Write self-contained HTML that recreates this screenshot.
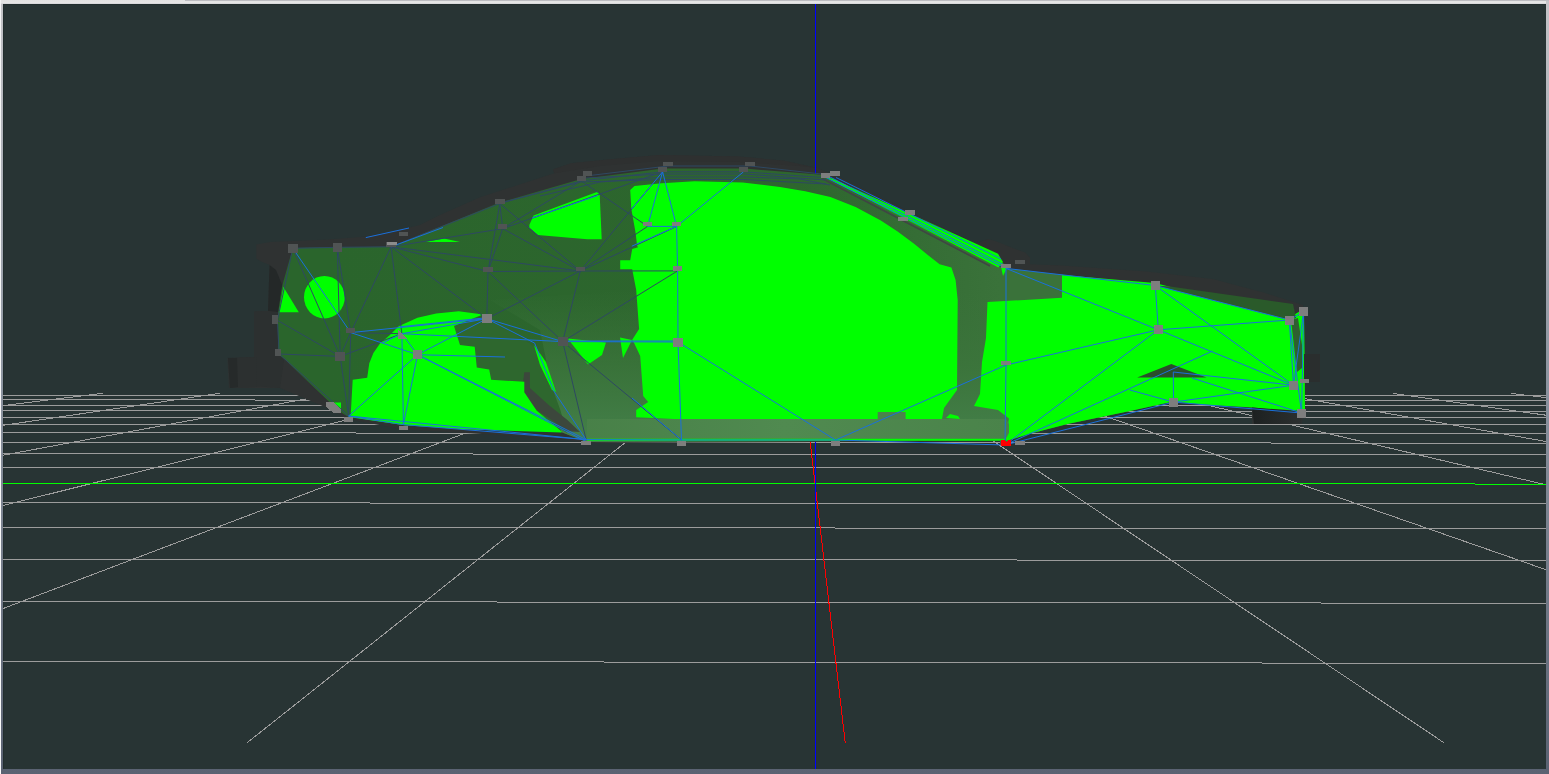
<!DOCTYPE html>
<html><head><meta charset="utf-8"><style>
html,body{margin:0;padding:0;width:1549px;height:774px;overflow:hidden;background:#fff;}
#frame{position:absolute;left:0;top:0;width:1549px;height:774px;background:linear-gradient(#c4c4c8,#8c94a0 50%,#5a6272);}
#c0{position:absolute;left:0;top:0;width:1px;height:774px;background:linear-gradient(#f4f4f4,#fafafa);}
#topbar{position:absolute;left:1px;top:0;width:1545px;height:4px;background:linear-gradient(#e2e2e2,#e6e6e6 70%,#d0d0d4);}
#row0{position:absolute;left:185px;top:0;width:1364px;height:1px;background:#bcbcc0;}
svg{position:absolute;left:0;top:0;}
</style></head><body>
<div id="frame"></div><div id="c0"></div><div id="topbar"></div><div id="row0"></div>
<svg width="1549" height="774" viewBox="0 0 1549 774">
<defs><clipPath id="vp"><rect x="3" y="4" width="1543" height="765"/></clipPath></defs>
<g clip-path="url(#vp)">
<rect x="3" y="4" width="1543" height="765" fill="#283434"/>
<rect x="3" y="4" width="1543" height="1" fill="#222e2e"/>
<rect x="3" y="4" width="1" height="765" fill="#222e2e"/>
<g shape-rendering="crispEdges">
<line x1="3.00" y1="395.37" x2="1546.00" y2="395.57" stroke="#9c9c9c" stroke-width="1"/>
<line x1="3.00" y1="399.97" x2="1546.00" y2="400.20" stroke="#9c9c9c" stroke-width="1"/>
<line x1="3.00" y1="405.08" x2="1546.00" y2="405.36" stroke="#9c9c9c" stroke-width="1"/>
<line x1="3.00" y1="410.80" x2="1546.00" y2="411.12" stroke="#9c9c9c" stroke-width="1"/>
<line x1="3.00" y1="417.24" x2="1546.00" y2="417.61" stroke="#9c9c9c" stroke-width="1"/>
<line x1="3.00" y1="424.54" x2="1546.00" y2="424.97" stroke="#9c9c9c" stroke-width="1"/>
<line x1="3.00" y1="432.89" x2="1546.00" y2="433.39" stroke="#9c9c9c" stroke-width="1"/>
<line x1="3.00" y1="442.53" x2="1546.00" y2="443.11" stroke="#9c9c9c" stroke-width="1"/>
<line x1="3.00" y1="453.80" x2="1546.00" y2="454.47" stroke="#9c9c9c" stroke-width="1"/>
<line x1="3.00" y1="467.13" x2="1546.00" y2="467.90" stroke="#9c9c9c" stroke-width="1"/>
<line x1="3.00" y1="502.76" x2="1546.00" y2="503.82" stroke="#9c9c9c" stroke-width="1"/>
<line x1="3.00" y1="527.33" x2="1546.00" y2="528.59" stroke="#9c9c9c" stroke-width="1"/>
<line x1="3.00" y1="559.01" x2="1546.00" y2="560.53" stroke="#9c9c9c" stroke-width="1"/>
<line x1="3.00" y1="601.42" x2="1546.00" y2="603.28" stroke="#9c9c9c" stroke-width="1"/>
<line x1="3.00" y1="661.10" x2="1546.00" y2="663.43" stroke="#9c9c9c" stroke-width="1"/>
<line x1="103.14" y1="393.25" x2="3.00" y2="405.58" stroke="#9c9c9c" stroke-width="1"/>
<line x1="219.68" y1="393.26" x2="3.00" y2="425.35" stroke="#9c9c9c" stroke-width="1"/>
<line x1="336.36" y1="393.28" x2="3.00" y2="455.23" stroke="#9c9c9c" stroke-width="1"/>
<line x1="453.18" y1="393.29" x2="3.00" y2="505.60" stroke="#9c9c9c" stroke-width="1"/>
<line x1="570.15" y1="393.30" x2="3.00" y2="608.57" stroke="#9c9c9c" stroke-width="1"/>
<line x1="687.26" y1="393.32" x2="246.79" y2="743.00" stroke="#9c9c9c" stroke-width="1"/>
<line x1="921.91" y1="393.35" x2="1444.32" y2="743.00" stroke="#9c9c9c" stroke-width="1"/>
<line x1="1039.45" y1="393.36" x2="1546.00" y2="569.69" stroke="#9c9c9c" stroke-width="1"/>
<line x1="1157.13" y1="393.37" x2="1546.00" y2="484.81" stroke="#9c9c9c" stroke-width="1"/>
<line x1="1274.96" y1="393.39" x2="1546.00" y2="441.50" stroke="#9c9c9c" stroke-width="1"/>
<line x1="1392.93" y1="393.40" x2="1546.00" y2="415.22" stroke="#9c9c9c" stroke-width="1"/>
<line x1="1511.04" y1="393.42" x2="1546.00" y2="397.58" stroke="#9c9c9c" stroke-width="1"/>
<line x1="3.00" y1="483.14" x2="1546.00" y2="484.05" stroke="#00ff00" stroke-width="1"/>
<line x1="804.51" y1="393.33" x2="845.29" y2="743.00" stroke="#ff0000" stroke-width="1"/>
<line x1="815.5" y1="4" x2="815.5" y2="769" stroke="#0000ff" stroke-width="1"/>
</g>
<g id="car">
<defs>
<linearGradient id="hullg" gradientUnits="userSpaceOnUse" x1="330" y1="0" x2="1000" y2="0">
<stop offset="0" stop-color="#2a652c"/><stop offset="0.7" stop-color="#2e662e"/><stop offset="1" stop-color="#3a723a"/>
</linearGradient>
<linearGradient id="lowg" gradientUnits="userSpaceOnUse" x1="0" y1="290" x2="0" y2="440">
<stop offset="0" stop-color="#3a733a" stop-opacity="0"/><stop offset="0.5" stop-color="#3c753c" stop-opacity="0.8"/><stop offset="1" stop-color="#44804a" stop-opacity="1"/>
</linearGradient>
<linearGradient id="rockg" gradientUnits="userSpaceOnUse" x1="560" y1="0" x2="1010" y2="0">
<stop offset="0" stop-color="#477f47"/><stop offset="0.5" stop-color="#508a50"/><stop offset="1" stop-color="#4a834a"/>
</linearGradient>
<linearGradient id="undg" gradientUnits="userSpaceOnUse" x1="1250" y1="0" x2="1302" y2="0">
<stop offset="0" stop-color="#1c2020"/><stop offset="1" stop-color="#2c3030"/>
</linearGradient>
</defs>
<!-- shell silhouette -->
<polygon fill="#2f3232" points="256.2,244.5 270,242 328,239.5 367,236.6 396,230.8 420,225 440,215 480,197.2 500,190.7 554.3,173.3 553,169.4 571,163.2 608,159.6 660,154.9 738.6,156.5 784,160.7 817,168 840,177.2 975,243.7 988.3,239 996.7,241.6 1015.2,249.1 1025.3,252.5 1030,257.5 1030,264.2 1062,265.5 1146.7,271.5 1212.7,279 1264.4,292.7 1293.3,302 1303,305 1304,354 1320,354 1320,382 1305,382 1305,411 1301.6,424 1252,424 1252,408 1202,404.4 1173,401.5 1130,411 1068.6,423.8 1030.6,433.6 1008,441 587,443 561,439 466,433 403,429.5 348,419 332,410 280,388 229,388 227.5,358 254,357 254,311.5 268,311 269.6,265 262,262 256.2,258.6"/>
<!-- shell shading -->
<polygon fill="#242828" points="269.6,265 276,270 283,287 279,312 268,311"/>
<polygon fill="#2c3030" points="254,311.5 278,312 278,354 284,360 280,388 254,386"/>
<polygon fill="#2c3030" points="228,358 256,357 257,387 230,388"/>
<polygon fill="#262a2a" points="228,358 237,358 238,387 230,388"/>
<polygon fill="#2e3030" points="554.3,173.3 553,169.4 571,163.2 608,159.6 660,154.9 738.6,156.5 784,160.7 817,168 800,166 740,162 660,161 600,166"/>
<!-- hull -->
<polygon fill="url(#hullg)" points="292.8,248 337.3,247.3 391,246.8 499.8,202.5 581.3,179 663,168.6 744.6,168.6 825.4,175.1 833,181 1003,268 1006,268.4 1155.3,285.5 1289.3,320 1295,317.5 1304,310 1305,411 1301.6,412.6 1254,407.5 1202,404.4 1173,401.5 1130,411 1068.6,423.8 1030.6,433.6 1008,440.6 587,442 561,432 404,425 348.6,417 338.9,410.9 284.6,359.2 278.1,354 278.1,312.7 282,286.8"/>
<polygon fill="url(#lowg)" points="490,300 640,290 1010,290 1010,440 587,442 561,432 540,330"/>
<!-- wheel well interior -->
<polygon fill="#2e672e" points="454,326 486,318 526.5,341 534.6,347.5 545.9,365.2 554,392.7 560.5,410.5 566.9,433.1 549,421 536.7,410.8 524.3,392.2 524.3,381.8 491.2,379.8 489.2,369.4 476.8,367.4 474.7,346.7 460,345"/>
<polygon fill="#3c473c" points="524.3,372.2 529.9,372.2 529.9,388 548.7,405 567.4,420 580,432 567.4,431.2 554.3,421.8 537.4,410.6 524.3,395.6 522.4,388"/>
<!-- bright green -->
<g fill="#00ff00">
<ellipse cx="324.4" cy="297.2" rx="20.4" ry="21.2"/>
<polygon points="283.3,286.8 298.8,312.2 278.9,312.2"/>
<polygon points="425,242 444,238.5 460,242"/>
<polygon points="529.4,224.7 533.6,215.4 597.6,191.7 599.7,194.8 601.7,239.2 587.3,239.2 537.7,235 529.4,227.8"/>
<polygon points="630.2,190 634.5,186 661.7,183.2 694.6,181.2 742.7,182.4 780,187 805.2,191.2 830.4,197 855.6,207.1 880.8,220.6 897.6,231.5 914.4,244 927.8,255 939.6,264.2 951.4,267.6 955.6,280 957.7,300 957,390 944,408 942,419 674.2,419 636.2,417.2 636.2,410 648.2,402 643.2,396 640.2,356 634.1,343 632.1,340 639.1,329 636.2,290 632.2,269.2 620.2,269.2 620.2,260.2 630.2,260.2 632.2,249.1 638,247.3 637.1,245.6 635.5,232.2 631.3,208.7"/>
<polygon points="348.6,417 350.7,414.9 352.7,379.8 367.2,377.7 369.3,363.2 373.4,352.9 380,343.5 389.4,335.6 398.7,326.2 417.5,317.8 436.2,313.5 458.7,311.2 483,314.6 454,326 460,345 474.7,346.7 476.8,367.4 489.2,369.4 491.2,379.8 524.3,381.8 524.3,392.2 536.7,410.8 549.1,421.1 561.5,431.4 561.5,432.5 466.4,429.4 404.4,425.2"/>
<polygon points="534,345 546,362 556,392 552,390 540,365"/>
<polygon points="567.7,338.4 606,342.5 602,355 588,364.5"/>
<polygon points="620,337.5 632,340 623,358"/>
<polygon points="329,402.5 341,402.5 341,412 335,410"/>
<polygon points="946,418 950,414 958,416 960,419"/>
<polygon points="987.5,302 1062,297.8 1062,275 1155,283 1289,317.5 1304,309 1305,411 1301.6,412.6 1254,407.5 1202,404.4 1173,401.5 1130,411 1068.6,423.8 1030.6,433.6 1006,441 1006,437 1009,418.4 998,410 974,406 980,394 982,362 986,338"/>
<polygon points="832,178.6 975,243.2 998,253.8 1003,262 998.4,267.6 825.4,176.9"/>
<polygon points="1000,262 1008,266 1003,276"/>
<rect x="587" y="438.5" width="418" height="2.2"/>
</g>
<!-- rocker -->
<polygon fill="url(#rockg)" points="587,419 1006,419 1009,424 1009,433 1006,438.5 587,438.5"/>
<polygon fill="#4a844a" points="877.7,419.5 877.7,412 905.6,412 905.6,419.5"/>
<!-- front details -->
<polygon fill="#2a4e2a" points="1137.2,377.5 1171.3,364 1206.5,377.5"/>
<polygon fill="url(#undg)" points="1252,407.5 1301.6,411 1301.6,424 1254,424"/>
<polygon fill="#2a2e2e" points="1304,354 1320,354 1320,382 1304,382"/>
<polygon fill="#2a5a2a" points="1170,286.5 1293,304 1296,318 1289.3,320 1155.3,285.5"/>
<polygon fill="#2f5f30" points="1291,320 1298,318 1302,345 1302,368 1297,372"/>
<line x1="822" y1="178.5" x2="990" y2="266" stroke="#404444" stroke-width="1.6"/>
<g stroke="#1a70dc" stroke-width="1"><line x1="822" y1="175.5" x2="1004" y2="267.5"/><line x1="829" y1="176.5" x2="1004" y2="265"/><line x1="836" y1="177.5" x2="1001" y2="259"/></g>
<g fill="none" stroke="#2e4862" stroke-width="1">
<polyline points="586,178 663,174 744,174 826,180"/>
<polyline points="540,196 600,182 663,177 744,177 800,179 830,185"/>
<polyline points="500,203 581,182 663,179.5 744,179.5 826,184"/>
</g>
<line x1="815.5" y1="4" x2="815.5" y2="173.5" stroke="#0000ff" stroke-width="1" shape-rendering="crispEdges"/>
</g><g><line x1="292.8" y1="248.3" x2="277.4" y2="320.3" stroke="#2e4862" stroke-width="1"/>
<line x1="277.4" y1="320.3" x2="279.2" y2="354.0" stroke="#2e4862" stroke-width="1"/>
<line x1="279.2" y1="354.0" x2="348.6" y2="416.0" stroke="#2e4862" stroke-width="1"/>
<line x1="292.8" y1="248.3" x2="337.3" y2="247.3" stroke="#2e4862" stroke-width="1"/>
<line x1="337.3" y1="247.3" x2="391.1" y2="246.8" stroke="#2e4862" stroke-width="1"/>
<line x1="292.8" y1="248.3" x2="340.2" y2="356.4" stroke="#2e4862" stroke-width="1"/>
<line x1="337.3" y1="247.3" x2="340.2" y2="356.4" stroke="#2e4862" stroke-width="1"/>
<line x1="337.3" y1="247.3" x2="350.7" y2="332.6" stroke="#2e4862" stroke-width="1"/>
<line x1="391.1" y1="246.8" x2="350.7" y2="332.6" stroke="#2e4862" stroke-width="1"/>
<line x1="391.1" y1="246.8" x2="401.9" y2="333.7" stroke="#2e4862" stroke-width="1"/>
<line x1="391.1" y1="246.8" x2="488.0" y2="271.5" stroke="#2e4862" stroke-width="1"/>
<line x1="391.1" y1="246.8" x2="580.3" y2="271.0" stroke="#2e4862" stroke-width="1"/>
<line x1="391.1" y1="246.8" x2="486.8" y2="318.7" stroke="#2e4862" stroke-width="1"/>
<line x1="391.1" y1="246.8" x2="499.8" y2="203.5" stroke="#2e4862" stroke-width="1"/>
<line x1="391.1" y1="246.8" x2="502.7" y2="228.6" stroke="#2e4862" stroke-width="1"/>
<line x1="277.4" y1="320.3" x2="340.2" y2="356.4" stroke="#2e4862" stroke-width="1"/>
<line x1="279.2" y1="354.0" x2="340.2" y2="356.4" stroke="#2e4862" stroke-width="1"/>
<line x1="350.7" y1="332.6" x2="401.9" y2="333.7" stroke="#2e4862" stroke-width="1"/>
<line x1="350.7" y1="332.6" x2="340.2" y2="356.4" stroke="#2e4862" stroke-width="1"/>
<line x1="350.7" y1="332.6" x2="348.6" y2="416.0" stroke="#2e4862" stroke-width="1"/>
<line x1="340.2" y1="356.4" x2="401.9" y2="333.7" stroke="#2e4862" stroke-width="1"/>
<line x1="340.2" y1="356.4" x2="348.6" y2="416.0" stroke="#2e4862" stroke-width="1"/>
<line x1="488.0" y1="271.5" x2="486.8" y2="318.7" stroke="#2e4862" stroke-width="1"/>
<line x1="488.0" y1="271.5" x2="580.3" y2="271.0" stroke="#2e4862" stroke-width="1"/>
<line x1="488.0" y1="271.5" x2="562.7" y2="341.6" stroke="#2e4862" stroke-width="1"/>
<line x1="580.3" y1="271.0" x2="562.7" y2="341.6" stroke="#2e4862" stroke-width="1"/>
<line x1="580.3" y1="271.0" x2="486.8" y2="318.7" stroke="#2e4862" stroke-width="1"/>
<line x1="562.7" y1="341.6" x2="586.1" y2="439.6" stroke="#2e4862" stroke-width="1"/>
<line x1="499.8" y1="203.5" x2="581.3" y2="180.9" stroke="#2e4862" stroke-width="1"/>
<line x1="581.3" y1="180.9" x2="662.6" y2="171.8" stroke="#2e4862" stroke-width="1"/>
<line x1="662.6" y1="171.8" x2="743.5" y2="171.8" stroke="#2e4862" stroke-width="1"/>
<line x1="587.5" y1="175.8" x2="668.0" y2="166.0" stroke="#2e4862" stroke-width="1"/>
<line x1="668.0" y1="166.0" x2="750.0" y2="166.0" stroke="#2e4862" stroke-width="1"/>
<line x1="743.5" y1="171.8" x2="825.4" y2="177.7" stroke="#2e4862" stroke-width="1"/>
<line x1="750.0" y1="166.0" x2="835.0" y2="175.5" stroke="#2e4862" stroke-width="1"/>
<line x1="499.8" y1="203.5" x2="502.7" y2="228.6" stroke="#2e4862" stroke-width="1"/>
<line x1="499.8" y1="203.5" x2="488.0" y2="271.5" stroke="#2e4862" stroke-width="1"/>
<line x1="502.7" y1="228.6" x2="488.0" y2="271.5" stroke="#2e4862" stroke-width="1"/>
<line x1="502.7" y1="228.6" x2="581.3" y2="180.9" stroke="#2e4862" stroke-width="1"/>
<line x1="499.8" y1="203.5" x2="580.3" y2="271.0" stroke="#2e4862" stroke-width="1"/>
<line x1="502.7" y1="228.6" x2="580.3" y2="271.0" stroke="#2e4862" stroke-width="1"/>
<line x1="502.7" y1="228.6" x2="662.6" y2="171.8" stroke="#2e4862" stroke-width="1"/>
<line x1="581.3" y1="180.9" x2="647.6" y2="226.4" stroke="#2e4862" stroke-width="1"/>
<line x1="580.3" y1="271.0" x2="662.6" y2="171.8" stroke="#2e4862" stroke-width="1"/>
<line x1="580.3" y1="271.0" x2="676.6" y2="226.4" stroke="#2e4862" stroke-width="1"/>
<line x1="580.3" y1="271.0" x2="647.6" y2="226.4" stroke="#2e4862" stroke-width="1"/>
<line x1="580.3" y1="271.0" x2="677.6" y2="270.9" stroke="#2e4862" stroke-width="1"/>
<line x1="677.6" y1="270.9" x2="562.7" y2="341.6" stroke="#2e4862" stroke-width="1"/>
<line x1="562.7" y1="341.6" x2="681.5" y2="440.0" stroke="#2e4862" stroke-width="1"/>
<line x1="365.8" y1="237.6" x2="409.0" y2="228.0" stroke="#1a70dc" stroke-width="1"/>
<line x1="292.8" y1="248.3" x2="350.7" y2="332.6" stroke="#1a70dc" stroke-width="1"/>
<line x1="391.1" y1="246.8" x2="443.0" y2="227.5" stroke="#1a70dc" stroke-width="1"/>
<line x1="401.9" y1="333.7" x2="486.8" y2="318.7" stroke="#1a70dc" stroke-width="1"/>
<line x1="399.8" y1="326.8" x2="484.0" y2="318.0" stroke="#1a70dc" stroke-width="1"/>
<line x1="382.3" y1="343.0" x2="401.9" y2="333.7" stroke="#1a70dc" stroke-width="1"/>
<line x1="401.9" y1="333.7" x2="417.6" y2="354.7" stroke="#1a70dc" stroke-width="1"/>
<line x1="417.6" y1="354.7" x2="486.8" y2="318.7" stroke="#1a70dc" stroke-width="1"/>
<line x1="401.9" y1="333.7" x2="562.7" y2="341.6" stroke="#1a70dc" stroke-width="1"/>
<line x1="486.8" y1="318.7" x2="562.7" y2="341.6" stroke="#1a70dc" stroke-width="1"/>
<line x1="417.6" y1="354.7" x2="348.6" y2="416.0" stroke="#1a70dc" stroke-width="1"/>
<line x1="350.7" y1="332.6" x2="417.6" y2="354.7" stroke="#1a70dc" stroke-width="1"/>
<line x1="350.7" y1="332.6" x2="486.8" y2="318.7" stroke="#1a70dc" stroke-width="1"/>
<line x1="417.6" y1="354.7" x2="403.4" y2="424.6" stroke="#1a70dc" stroke-width="1"/>
<line x1="401.9" y1="333.7" x2="403.4" y2="424.6" stroke="#1a70dc" stroke-width="1"/>
<line x1="417.6" y1="354.7" x2="586.1" y2="439.6" stroke="#1a70dc" stroke-width="1"/>
<line x1="417.6" y1="354.7" x2="586.1" y2="441.5" stroke="#1a70dc" stroke-width="1"/>
<line x1="486.8" y1="318.7" x2="534.6" y2="343.1" stroke="#1a70dc" stroke-width="1"/>
<line x1="534.6" y1="343.1" x2="554.3" y2="391.8" stroke="#1a70dc" stroke-width="1"/>
<line x1="554.3" y1="391.8" x2="586.1" y2="439.6" stroke="#1a70dc" stroke-width="1"/>
<line x1="348.6" y1="416.0" x2="403.4" y2="424.6" stroke="#1a70dc" stroke-width="1"/>
<line x1="403.4" y1="424.6" x2="586.1" y2="439.6" stroke="#1a70dc" stroke-width="1"/>
<line x1="348.6" y1="416.0" x2="586.1" y2="439.6" stroke="#1a70dc" stroke-width="1"/>
<line x1="417.6" y1="354.7" x2="505.0" y2="357.0" stroke="#1a70dc" stroke-width="1"/>
<line x1="532.0" y1="218.1" x2="597.9" y2="195.4" stroke="#1a70dc" stroke-width="1"/>
<line x1="662.6" y1="171.8" x2="631.6" y2="209.1" stroke="#1a70dc" stroke-width="1"/>
<line x1="631.8" y1="246.2" x2="676.6" y2="226.4" stroke="#1a70dc" stroke-width="1"/>
<line x1="662.6" y1="171.8" x2="647.6" y2="226.4" stroke="#1a70dc" stroke-width="1"/>
<line x1="662.6" y1="171.8" x2="676.6" y2="226.4" stroke="#1a70dc" stroke-width="1"/>
<line x1="647.6" y1="226.4" x2="676.6" y2="226.4" stroke="#1a70dc" stroke-width="1"/>
<line x1="676.6" y1="226.4" x2="677.6" y2="270.9" stroke="#1a70dc" stroke-width="1"/>
<line x1="743.5" y1="171.8" x2="676.6" y2="226.4" stroke="#1a70dc" stroke-width="1"/>
<line x1="677.6" y1="270.9" x2="678.0" y2="342.0" stroke="#1a70dc" stroke-width="1"/>
<line x1="562.7" y1="341.6" x2="678.0" y2="342.0" stroke="#1a70dc" stroke-width="1"/>
<line x1="564.0" y1="341.0" x2="676.0" y2="341.0" stroke="#1a70dc" stroke-width="1"/>
<line x1="678.0" y1="342.0" x2="681.5" y2="440.0" stroke="#1a70dc" stroke-width="1"/>
<line x1="632.0" y1="398.0" x2="681.5" y2="440.0" stroke="#1a70dc" stroke-width="1"/>
<line x1="678.0" y1="342.0" x2="835.5" y2="440.0" stroke="#1a70dc" stroke-width="1"/>
<line x1="835.5" y1="440.0" x2="1006.0" y2="365.0" stroke="#1a70dc" stroke-width="1"/>
<line x1="1006.0" y1="365.0" x2="1006.0" y2="268.4" stroke="#1a70dc" stroke-width="1"/>
<line x1="1006.0" y1="365.0" x2="1005.0" y2="445.0" stroke="#1a70dc" stroke-width="1"/>
<line x1="1006.0" y1="268.4" x2="1155.3" y2="285.5" stroke="#1a70dc" stroke-width="1"/>
<line x1="1006.0" y1="268.4" x2="1158.3" y2="329.8" stroke="#1a70dc" stroke-width="1"/>
<line x1="1155.3" y1="285.5" x2="1158.3" y2="329.8" stroke="#1a70dc" stroke-width="1"/>
<line x1="1155.3" y1="285.5" x2="1289.3" y2="320.0" stroke="#1a70dc" stroke-width="1"/>
<line x1="1155.3" y1="285.5" x2="1293.5" y2="385.2" stroke="#1a70dc" stroke-width="1"/>
<line x1="1158.3" y1="329.8" x2="1289.3" y2="320.0" stroke="#1a70dc" stroke-width="1"/>
<line x1="1158.3" y1="329.8" x2="1293.5" y2="385.2" stroke="#1a70dc" stroke-width="1"/>
<line x1="1158.3" y1="329.8" x2="1006.0" y2="365.0" stroke="#1a70dc" stroke-width="1"/>
<line x1="1158.3" y1="329.8" x2="1005.0" y2="445.0" stroke="#1a70dc" stroke-width="1"/>
<line x1="1289.3" y1="320.0" x2="1303.6" y2="311.8" stroke="#1a70dc" stroke-width="1"/>
<line x1="1303.6" y1="311.8" x2="1301.6" y2="413.0" stroke="#1a70dc" stroke-width="1"/>
<line x1="1289.3" y1="320.0" x2="1293.5" y2="385.2" stroke="#1a70dc" stroke-width="1"/>
<line x1="1289.3" y1="320.0" x2="1301.6" y2="413.0" stroke="#1a70dc" stroke-width="1"/>
<line x1="1303.6" y1="311.8" x2="1293.5" y2="385.2" stroke="#1a70dc" stroke-width="1"/>
<line x1="1173.5" y1="402.1" x2="1293.5" y2="385.2" stroke="#1a70dc" stroke-width="1"/>
<line x1="1005.0" y1="445.0" x2="1212.5" y2="351.0" stroke="#1a70dc" stroke-width="1"/>
<line x1="1005.0" y1="445.0" x2="1173.5" y2="402.1" stroke="#1a70dc" stroke-width="1"/>
<line x1="1173.3" y1="372.0" x2="1293.5" y2="385.2" stroke="#1a70dc" stroke-width="1"/>
<line x1="1130.0" y1="390.0" x2="1173.5" y2="402.1" stroke="#1a70dc" stroke-width="1"/>
<line x1="1192.0" y1="378.0" x2="1301.6" y2="413.0" stroke="#1a70dc" stroke-width="1"/>
<line x1="1173.5" y1="402.1" x2="1301.6" y2="413.0" stroke="#1a70dc" stroke-width="1"/>
<line x1="1173.5" y1="402.1" x2="1173.3" y2="372.0" stroke="#1a70dc" stroke-width="1"/>
<line x1="586.1" y1="439.6" x2="681.5" y2="440.0" stroke="#1a70dc" stroke-width="1"/>
<line x1="681.5" y1="440.0" x2="835.5" y2="440.0" stroke="#1a70dc" stroke-width="1"/>
<line x1="835.5" y1="440.0" x2="1005.0" y2="445.0" stroke="#1a70dc" stroke-width="1"/></g><g shape-rendering="crispEdges"><rect x="288.1" y="243.8" width="9.5" height="9" fill="#505454"/>
<rect x="332.6" y="242.8" width="9.5" height="9" fill="#505454"/>
<rect x="386.4" y="242.3" width="9.5" height="4.5" fill="#505454"/>
<rect x="398.6" y="231.5" width="9.5" height="4.5" fill="#505454"/>
<rect x="345.9" y="328.1" width="9.5" height="4.5" fill="#505454"/>
<rect x="335.4" y="351.9" width="9.5" height="9" fill="#505454"/>
<rect x="343.9" y="417.0" width="9.5" height="4.5" fill="#7e7e7e"/>
<rect x="412.9" y="350.2" width="9.5" height="9" fill="#7e7e7e"/>
<rect x="482.1" y="314.2" width="9.5" height="9" fill="#7e7e7e"/>
<rect x="558.0" y="337.1" width="9.5" height="9" fill="#505454"/>
<rect x="398.6" y="425.6" width="9.5" height="4.5" fill="#7e7e7e"/>
<rect x="581.4" y="440.6" width="9.5" height="4.5" fill="#7e7e7e"/>
<rect x="483.2" y="267.0" width="9.5" height="4.5" fill="#505454"/>
<rect x="575.5" y="266.5" width="9.5" height="4.5" fill="#505454"/>
<rect x="495.1" y="199.0" width="9.5" height="4.5" fill="#505454"/>
<rect x="497.9" y="224.1" width="9.5" height="4.5" fill="#505454"/>
<rect x="576.5" y="176.4" width="9.5" height="4.5" fill="#505454"/>
<rect x="582.8" y="171.3" width="9.5" height="4.5" fill="#505454"/>
<rect x="657.9" y="167.3" width="9.5" height="4.5" fill="#505454"/>
<rect x="663.2" y="161.5" width="9.5" height="4.5" fill="#505454"/>
<rect x="738.8" y="167.3" width="9.5" height="4.5" fill="#505454"/>
<rect x="745.2" y="161.5" width="9.5" height="4.5" fill="#505454"/>
<rect x="642.9" y="221.9" width="9.5" height="4.5" fill="#7e7e7e"/>
<rect x="671.9" y="221.9" width="9.5" height="4.5" fill="#7e7e7e"/>
<rect x="672.9" y="266.4" width="9.5" height="4.5" fill="#7e7e7e"/>
<rect x="673.2" y="337.5" width="9.5" height="9" fill="#7e7e7e"/>
<rect x="676.8" y="441.0" width="9.5" height="4.5" fill="#7e7e7e"/>
<rect x="820.6" y="173.2" width="9.5" height="4.5" fill="#7e7e7e"/>
<rect x="830.2" y="171.0" width="9.5" height="4.5" fill="#7e7e7e"/>
<rect x="898.1" y="216.5" width="9.5" height="4.5" fill="#7e7e7e"/>
<rect x="905.0" y="210.0" width="9.5" height="4.5" fill="#7e7e7e"/>
<rect x="830.8" y="441.0" width="9.5" height="4.5" fill="#7e7e7e"/>
<rect x="1001.2" y="263.9" width="9.5" height="4.5" fill="#7e7e7e"/>
<rect x="1015.2" y="259.5" width="9.5" height="4.5" fill="#505454"/>
<rect x="1001.2" y="360.5" width="9.5" height="4.5" fill="#7e7e7e"/>
<rect x="1000.2" y="440.5" width="9.5" height="4.5" fill="#505454"/>
<rect x="1015.2" y="440.5" width="9.5" height="4.5" fill="#7e7e7e"/>
<rect x="1150.5" y="281.0" width="9.5" height="9" fill="#7e7e7e"/>
<rect x="1153.5" y="325.3" width="9.5" height="9" fill="#7e7e7e"/>
<rect x="1168.8" y="397.6" width="9.5" height="9" fill="#7e7e7e"/>
<rect x="1284.5" y="315.5" width="9.5" height="9" fill="#7e7e7e"/>
<rect x="1298.8" y="307.3" width="9.5" height="9" fill="#7e7e7e"/>
<rect x="1288.8" y="380.7" width="9.5" height="9" fill="#7e7e7e"/>
<rect x="1299.8" y="378.9" width="9.5" height="4.5" fill="#7e7e7e"/>
<rect x="1296.8" y="408.5" width="9.5" height="9" fill="#7e7e7e"/>
<rect x="387" y="242" width="9.5" height="3" fill="#8c8c8c"/>
<rect x="272.2" y="315.1" width="5.5" height="9.3" fill="#505454"/><rect x="275.1" y="348.8" width="5.5" height="7" fill="#505454"/>
<polygon points="398,329 407.3,339 398,339" fill="#7e7e7e"/>
<polygon points="326,402 333,402 341,409 341,412.5 333,412.5 326,407" fill="#7e7e7e"/>
<path d="M1001,440 L1004,440 L1006,442 L1008,440 L1011,440 L1011,446 L1001,446 Z" fill="#ff0000"/></g>
</g>
</svg>
</body></html>
